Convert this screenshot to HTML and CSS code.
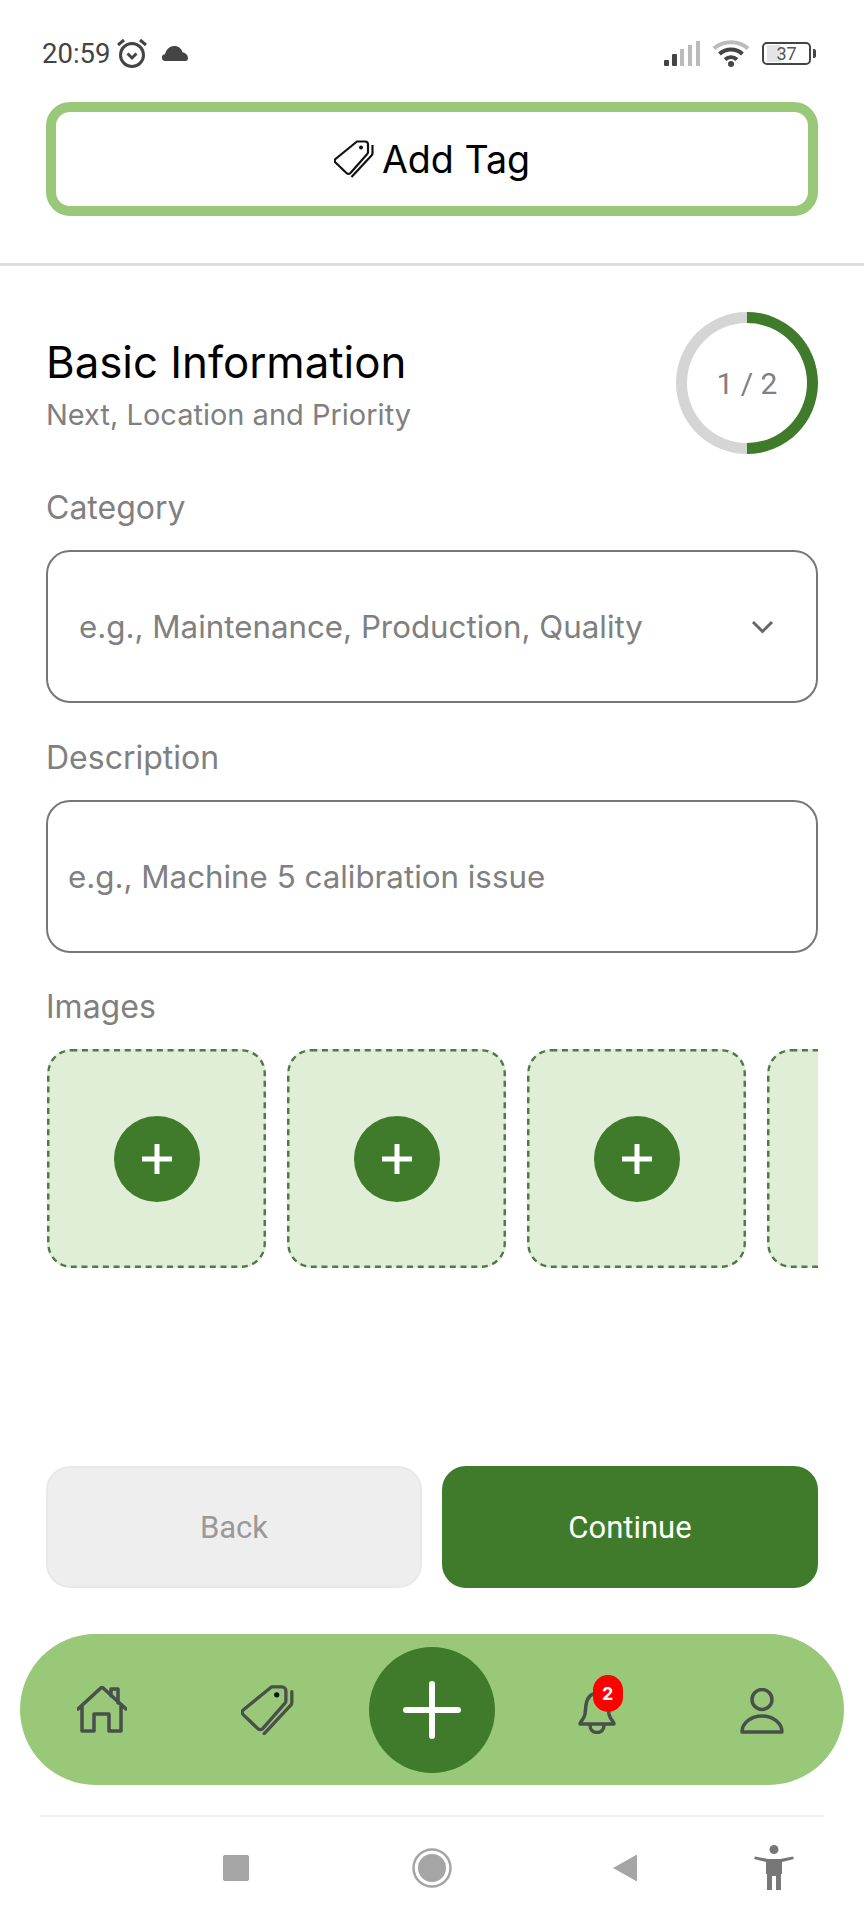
FILE: index.html
```html
<!DOCTYPE HTML>
<html>
<head>
<meta http-equiv="Content-Type" content="text/html; charset=utf-8">
<title>Add Tag</title>
<link rel="stylesheet" href="styles.css">
</head>
<body>
<svg class="defs" width="0" height="0">
	<symbol id="tag" viewBox="0 0 40 38">
		<path d="M23 1.500H31a3 3 0 0 1 3 3V12a3 3 0 0 1-1 2.200L16.500 33a3 3 0 0 1-4 0L1.500 22.500a2.500 2.500 0 0 1 0-3.500Z"/>
		<path d="M38.500 5V13a3 3 0 0 1-1 2.500L17.500 37"/>
		<circle class="dot" cx="27" cy="7.500" r="2"/>
	</symbol>
</svg>
<div class="page">
	<div class="status">
		<span class="time">20:59</span>
		<svg class="alarm" viewBox="0 0 32 30"><circle cx="16" cy="17" r="11.500"/><path d="M11.500 15.500 16 20l4.500-4.500M2 7l6-5M30 7l-6-5"/></svg>
		<svg class="cloud" viewBox="0 0 26 15"><path d="M3.500 15a3.400 3.400 0 0 1-.5-6.800C4 3.500 8 0 12.500 0c4 0 7 2.500 8 6.300 3 .3 5.500 3 5.500 5.700 0 1.500-.7 3-2 3Z"/></svg>
		<div class="status-right">
			<svg class="signal" viewBox="0 0 37 25"><rect class="on" x="0" y="19" width="5" height="6" rx="1"/><rect class="on" x="8" y="13" width="5" height="12" rx="1"/><rect x="16" y="8" width="4" height="17"/><rect x="24" y="4" width="4" height="21"/><rect x="32" y="0" width="4" height="25"/></svg>
			<svg class="wifi" viewBox="0 0 38 28"><path class="far" d="M2 9.500C11 1 27 1 36 9.500"/><path d="M7.500 15C14 9 24 9 30.500 15M13 20.500C16.500 17.500 21.500 17.500 25 20.500"/><circle cx="19" cy="25" r="3"/></svg>
			<div class="battery"><span class="level">37</span></div>
		</div>
	</div>

	<div class="add-wrap">
		<div class="add-tag">
			<svg class="tag-icon"><use href="#tag"/></svg>
			<span>Add Tag</span>
		</div>
	</div>
	<div class="divider"></div>

	<div class="form">
		<div class="head">
			<div>
				<h1>Basic Information</h1>
				<p>Next, Location and Priority</p>
			</div>
			<div class="ring"><div class="ring-in">1 / 2</div></div>
		</div>

		<div class="label">Category</div>
		<div class="field field-select">
			<span>e.g., Maintenance, Production, Quality</span>
			<svg class="chev" viewBox="0 0 23 14"><path d="M2 2l9.500 9.500L21 2"/></svg>
		</div>

		<div class="label">Description</div>
		<div class="field">
			<span>e.g., Machine 5 calibration issue</span>
		</div>

		<div class="label">Images</div>
		<div class="tiles">
			<div class="tile"><div class="add-img"><svg viewBox="0 0 32 32"><path d="M16 1V31M1 16H31"/></svg></div></div>
			<div class="tile"><div class="add-img"><svg viewBox="0 0 32 32"><path d="M16 1V31M1 16H31"/></svg></div></div>
			<div class="tile"><div class="add-img"><svg viewBox="0 0 32 32"><path d="M16 1V31M1 16H31"/></svg></div></div>
			<div class="tile"><div class="add-img"><svg viewBox="0 0 32 32"><path d="M16 1V31M1 16H31"/></svg></div></div>
		</div>

		<div class="buttons">
			<div class="btn btn-back">Back</div>
			<div class="btn btn-next">Continue</div>
		</div>
	</div>

	<div class="nav">
		<div class="nav-item">
			<svg class="i-home" viewBox="0 0 50 48"><path d="M1 23 25 1 49 23M5 20V45H17V28H32V45H44V20M34 10V3H41V17"/></svg>
		</div>
		<div class="nav-item">
			<svg class="i-tag"><use href="#tag"/></svg>
		</div>
		<div class="nav-item">
			<div class="fab"><svg viewBox="0 0 58 58"><path d="M29 3V55M3 29H55"/></svg></div>
		</div>
		<div class="nav-item">
			<div class="bell">
				<svg viewBox="0 0 38 44"><path d="M2 34c0-3 4-4 5-10L8 15C9 7 14 3 19 3s10 4 11 12l1 9c1 6 5 7 5 10ZM12 35c0 10 14 10 14 0"/></svg>
				<span class="badge">2</span>
			</div>
		</div>
		<div class="nav-item">
			<svg class="i-user" viewBox="0 0 44 46"><circle cx="22" cy="11.500" r="10"/><path d="M2 44c0-9 9-16 20-16s20 7 20 16Z"/></svg>
		</div>
	</div>

	<div class="sys">
		<div class="sys-square"></div>
		<svg class="sys-circle" viewBox="0 0 40 40"><circle cx="20" cy="20" r="18.500"/><circle class="fill" cx="20" cy="20" r="14"/></svg>
		<svg class="sys-back" viewBox="0 0 26 30"><path d="M25 1.500V28.500L1 15Z"/></svg>
		<svg class="sys-acc" viewBox="0 0 40 46"><circle cx="20" cy="4.500" r="4.500"/><path d="M1 11.500 14 14H26L39 11.500 40 14 28 17V29H27V45H22V31H18V45H13V29H12V17L0 14Z"/></svg>
	</div>
</div>
</body>
</html>
```

FILE: styles.css
```css
*{box-sizing:border-box;}
body{margin:0; background-color:#fff; color:#000; font-family:"Inter","Noto Sans",sans-serif;}
.defs{display:block; height:0;}
.page{width:864px; height:1920px; display:flex; flex-direction:column; overflow:hidden;}

/* status bar */
.status{height:102px; padding:4px 53px 0 42px; display:flex; align-items:center; color:#444;}
.time{font-family:"Roboto",sans-serif; font-size:27.500px; width:74px;}
.alarm{width:32px; height:30px; fill:none; stroke:#444; stroke-width:3;}
.cloud{width:26px; height:15px; margin-left:14px; fill:#444;}
.status-right{margin-left:auto; display:flex; align-items:center;}
.signal{width:37px; height:25px; fill:#bbb;}
.signal .on{fill:#444;}
.wifi{width:38px; height:28px; margin-left:11px; fill:#444; stroke:#444; stroke-width:4;}
.wifi path{fill:none;}
.wifi .far{stroke:#bbb;}
.wifi circle{stroke:none;}
.battery{position:relative; width:49px; height:23px; margin-left:12px; border:2.500px solid #444; border-radius:5px; padding:1px 3px;}
.battery:after{content:""; position:absolute; right:-7px; top:5px; width:3px; height:9px; background-color:#444; border-radius:0 2px 2px 0;}
.level{display:block; height:100%; font-family:"Roboto",sans-serif; font-size:18px; line-height:17px; text-align:center; color:#555; background:linear-gradient(90deg,#e4e4e4 0 37%,transparent 37%);}

/* add tag */
.add-wrap{padding:0 46px;}
.add-tag{height:114px; border:10px solid #99c978; border-radius:24px; display:flex; align-items:center; justify-content:center; gap:8px; font-size:37.600px;}
.tag-icon{width:40px; height:38px; fill:none; stroke:#111; stroke-width:2.200;}
.dot{fill:#111; stroke:none;}
.divider{height:3px; margin-top:47px; background-color:#ddd;}

/* form */
.form{flex:1; padding:46px 46px 0; display:flex; flex-direction:column;}
.head{display:flex; justify-content:space-between; height:142px;}
h1{margin:26px 0 0; font-size:43.800px; font-weight:400; line-height:50px;}
.head p{margin:8px 0 0; font-size:29px; line-height:38px; color:#808080;}
.ring{width:142px; height:142px; border-radius:50%; background:conic-gradient(#3f7b2a 0 50%,#d5d5d5 50% 100%); display:flex; align-items:center; justify-content:center;}
.ring-in{width:120px; height:120px; border-radius:50%; background-color:#fff; display:flex; align-items:center; justify-content:center; font-family:"Roboto",sans-serif; font-size:30px; color:#808080;}
.label{height:38px; margin:35px 0 23px; font-size:32px; line-height:38px; color:#808080;}
.field{height:153px; border:2px solid #777; border-radius:24px; padding:0 20px; display:flex; align-items:center; justify-content:space-between; font-size:31.300px; color:#808080;}
.field-select{padding:0 42px 0 31px; margin-bottom:1px;}
.chev{width:23px; height:14px; fill:none; stroke:#666; stroke-width:3;}
.tiles{display:flex; gap:21px; padding-left:1px; overflow:hidden; flex:none;}
.tile{flex:none; width:219px; height:219px; background-color:#e0eed8; border-radius:24px; display:flex; align-items:center; justify-content:center;
	background-image:url("data:image/svg+xml,%3Csvg xmlns='http://www.w3.org/2000/svg' width='219' height='219'%3E%3Crect x='1.250' y='1.250' width='216.500' height='216.500' rx='23' fill='none' stroke='%234f7a47' stroke-width='2.500' stroke-dasharray='6 4.700'/%3E%3C/svg%3E");}
.add-img{width:86px; height:86px; border-radius:50%; background-color:#3f7b2a; display:flex; align-items:center; justify-content:center;}
.add-img svg{width:32px; height:32px; fill:none; stroke:#fff; stroke-width:5;}
.buttons{margin-top:auto; margin-bottom:46px; display:flex; gap:20px;}
.btn{flex:1; height:122px; border:2px solid transparent; border-radius:24px; display:flex; align-items:center; justify-content:center; font-family:"Roboto",sans-serif; font-size:31px;}
.btn-back{background-color:#eee; border-color:#e8e8e8; color:#999;}
.btn-next{background-color:#3f7b2a; border-color:#3f7b2a; color:#fff;}

/* bottom nav */
.nav{flex:none; height:151px; margin:0 20px; border-radius:76px; background-color:#99c978; display:flex; align-items:center;}
.nav-item{flex:1; display:flex; justify-content:center;}
.nav-item svg{fill:none; stroke:#47504a; stroke-width:3.500; stroke-linejoin:round; stroke-linecap:round;}
.i-home{width:50px; height:48px;}
.nav-item .i-tag{width:53px; height:50px; stroke-width:2.500;}
.fab{width:126px; height:126px; border-radius:50%; background-color:#3f7b2a; display:flex; align-items:center; justify-content:center;}
.nav-item .fab svg{width:58px; height:58px; stroke:#fff; stroke-width:6;}
.bell{position:relative; width:38px; height:44px; margin-top:4px;}
.bell svg{width:38px; height:44px;}
.badge{position:absolute; left:15px; top:-15px; width:30px; height:37px; border-radius:15px; background-color:#f00; color:#fff; font-size:18px; font-weight:700; display:flex; align-items:center; justify-content:center;}
.i-user{width:44px; height:46px; margin-top:2px;}

/* system nav */
.sys{flex:none; height:105px; margin:30px 40px 0; border-top:2px solid #eee; padding:0 0 2px 183px; display:flex; align-items:center;}
.sys-square{width:26px; height:26px; border-radius:2px; background-color:#a5a5a5;}
.sys-circle{width:40px; height:40px; margin-left:163px; fill:none; stroke:#a5a5a5; stroke-width:2.500;}
.sys-circle .fill{fill:#a5a5a5; stroke:none;}
.sys-back{width:26px; height:30px; margin-left:160px; fill:#a5a5a5;}
.sys-acc{width:40px; height:46px; margin-left:116px; fill:#777;}
```
